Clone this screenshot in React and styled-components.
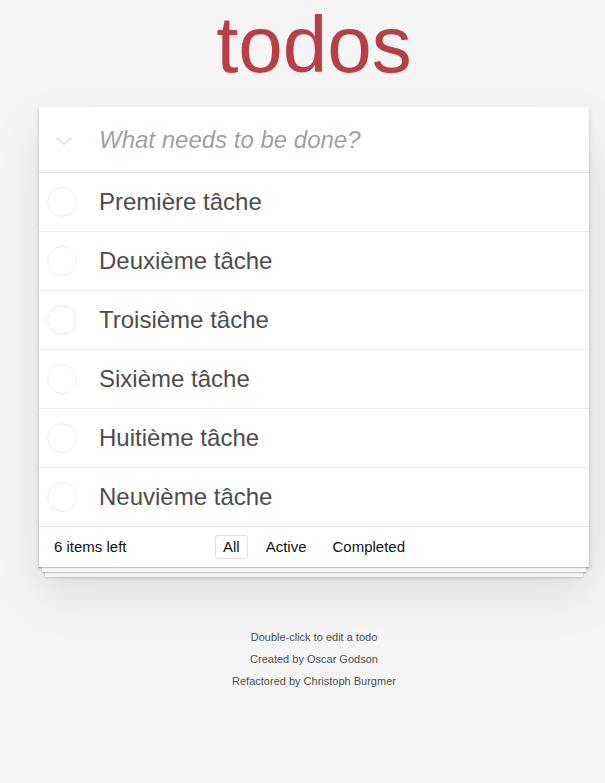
import React from 'react';
import styled, { createGlobalStyle } from 'styled-components';

const GlobalStyle = createGlobalStyle`
  html, body {
    margin: 0;
    padding: 0;
  }
  body {
    background: #f5f5f5;
    font: 14px 'Liberation Sans', Arial, sans-serif;
    line-height: 1.4em;
    color: #4d4d4d;
    -webkit-font-smoothing: antialiased;
  }
`;

const todos = [
  'Première tâche',
  'Deuxième tâche',
  'Troisième tâche',
  'Sixième tâche',
  'Huitième tâche',
  'Neuvième tâche',
];

const App = () => {
  return (
    <>
      <GlobalStyle />
      <Page>
        <Title>todos</Title>
        <TodoApp>
          <Header>
            <ToggleAll>
              <svg width='20' height='10' viewBox='0 0 20 10'>
                <polyline
                  points='2,1.5 10,8 18,1.5'
                  fill='none'
                  stroke='#e6e6e6'
                  strokeWidth='2.2'
                />
              </svg>
            </ToggleAll>
            <NewTodo placeholder='What needs to be done?' autoFocus />
          </Header>
          <Main>
            {todos.map((todo) => (
              <Row key={todo}>
                <Toggle>
                  <svg width='30' height='30' viewBox='0 0 30 30'>
                    <circle
                      cx='15'
                      cy='15'
                      r='14.4'
                      fill='none'
                      stroke='#ededed'
                      strokeWidth='1'
                    />
                  </svg>
                </Toggle>
                <Label>{todo}</Label>
              </Row>
            ))}
          </Main>
          <Footer>
            <Count>
              <strong>6</strong> items left
            </Count>
            <Filters>
              <Filter selected>All</Filter>
              <Filter>Active</Filter>
              <Filter>Completed</Filter>
            </Filters>
            <span />
          </Footer>
        </TodoApp>
        <Info>
          <p>Double-click to edit a todo</p>
          <p>Created by Oscar Godson</p>
          <p>Refactored by Christoph Burgmer</p>
        </Info>
      </Page>
    </>
  );
};

const Page = styled.div`
  width: 550px;
  margin: 0 0 0 39px;
`;

const Title = styled.h1`
  margin: 5px 0 22px;
  font-size: 80px;
  line-height: 80px;
  font-weight: 400;
  text-align: center;
  color: #b83f45;
`;

const TodoApp = styled.section`
  position: relative;
  background: #fff;
  box-shadow: 0 2px 4px 0 rgba(0, 0, 0, 0.2), 0 25px 50px 0 rgba(0, 0, 0, 0.1);
`;

const Header = styled.header`
  display: flex;
  align-items: center;
  height: 65px;
  box-shadow: inset 0 -2px 1px rgba(0, 0, 0, 0.03);
`;

const ToggleAll = styled.span`
  display: flex;
  align-items: center;
  justify-content: center;
  width: 50px;
  height: 100%;
  padding-top: 2px;
  box-sizing: border-box;
`;

const NewTodo = styled.input`
  flex: 1;
  height: 100%;
  border: none;
  outline: none;
  background: transparent;
  padding: 0 16px 0 10px;
  font: 24px 'Liberation Sans', Arial, sans-serif;
  color: #4d4d4d;
  caret-color: #222;
  &::placeholder {
    font-style: italic;
    color: rgba(0, 0, 0, 0.4);
  }
`;

const Main = styled.ul`
  list-style: none;
  margin: 0;
  padding: 0;
  border-top: 1px solid #e6e6e6;
`;

const Row = styled.li`
  display: flex;
  align-items: center;
  height: 58px;
  padding-left: 8px;
  border-bottom: 1px solid #ededed;
  &:last-child {
    border-bottom: none;
  }
`;

const Toggle = styled.span`
  display: flex;
  width: 30px;
  height: 30px;
`;

const Label = styled.label`
  margin-left: 22px;
  font-size: 24px;
  line-height: 1.2;
  color: #4d4d4d;
`;

const Footer = styled.footer`
  position: relative;
  display: grid;
  grid-template-columns: 1fr auto 1fr;
  grid-template-rows: 20px;
  align-items: center;
  height: 20px;
  padding: 10px 15px;
  border-top: 1px solid #e6e6e6;
  font-size: 15px;
  color: #111;
  &::before {
    content: '';
    position: absolute;
    right: 0;
    bottom: 0;
    left: 0;
    height: 50px;
    overflow: hidden;
    pointer-events: none;
    box-shadow: 0 1px 1px rgba(0, 0, 0, 0.2), 0 8px 0 -3px #f6f6f6,
      0 9px 1px -3px rgba(0, 0, 0, 0.2), 0 16px 0 -6px #f6f6f6,
      0 17px 2px -6px rgba(0, 0, 0, 0.2);
  }
  strong {
    font-weight: 400;
  }
`;

const Count = styled.span`
  text-align: left;
`;

const Filters = styled.ul`
  display: flex;
  gap: 4px;
  list-style: none;
  margin: 0;
  padding: 0;
`;

const Filter = styled.li`
  margin: 3px;
  padding: 3px 7px;
  line-height: 16px;
  border: 1px solid ${(p) => (p.selected ? '#e8dede' : 'transparent')};
  border-radius: 3px;
  color: inherit;
  cursor: pointer;
`;

const Info = styled.footer`
  margin: 65px auto 0;
  color: #4d4d4d;
  font-size: 11px;
  text-shadow: 0 1px 0 rgba(255, 255, 255, 0.5);
  text-align: center;
  p {
    line-height: 1;
    margin: 11px 0;
  }
`;

export default App;
